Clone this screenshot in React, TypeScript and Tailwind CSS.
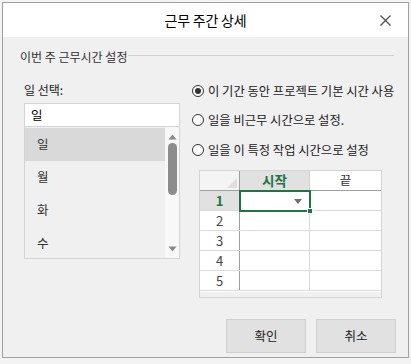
import React from "react";

const font = { fontFamily: '"Noto Sans CJK KR", "Noto Sans", sans-serif' };

function Radio({ checked }: { checked?: boolean }) {
  return (
    <svg width="12" height="12" viewBox="0 0 12 12" className="shrink-0">
      <circle cx="6" cy="6" r="5.5" fill="#fff" stroke="#333" strokeWidth="1" />
      {checked && <circle cx="6" cy="6" r="3" fill="#333" />}
    </svg>
  );
}

export default function App() {
  const rows = [1, 2, 3, 4, 5];
  return (
    <div className="w-[411px] h-[364px] bg-[#f3f3f3] overflow-hidden pl-[2px] pt-[2px]" style={font}>
      <div className="w-[407px] h-[356px] border border-[#a0a0a0] bg-[#f0f0f0] flex flex-col">
        {/* title bar */}
        <div className="h-[34px] bg-white flex items-center justify-center relative shrink-0">
          <span className="text-[14px] text-black tracking-[-0.2px]">근무 주간 상세</span>
          <svg className="absolute left-[377px] top-[12px]" width="11" height="11" viewBox="0 0 11 11">
            <path d="M0.5 0.5 L10.5 10.5 M10.5 0.5 L0.5 10.5" stroke="#555" strokeWidth="1.4" />
          </svg>
        </div>
        {/* group header */}
        <div className="flex items-center pl-[17px] pr-[14px] mt-[12px] h-[16px]">
          <span className="text-[12px] text-[#333] whitespace-nowrap">이번 주 근무시간 설정</span>
          <div className="flex-1 h-px bg-[#cfcfcf] ml-[1px] -mt-[4px]" />
        </div>
        <div className="flex mt-[17px]">
          {/* left */}
          <div className="ml-[21px] w-[156px] flex flex-col">
            <div className="text-[12px] text-[#222] leading-[16px] h-[16px]">일 선택:</div>
            <div className="mt-[5px] h-[24px] bg-white border border-[#d4d4d4] flex items-center pl-[6px] text-[12.5px] text-black">일</div>
            <div className="h-[132px] border border-[#d4d4d4] border-t-0 flex bg-[#f0f0f0]">
              <div className="flex-1 flex flex-col pt-[1px]">
                {["일", "월", "화", "수"].map((d, i) => (
                  <div
                    key={d}
                    className={`h-[33px] shrink-0 flex items-center pl-[12px] text-[12.5px] text-[#333] ${i === 0 ? "bg-[#d9d9d9]" : ""}`}
                  >
                    {d}
                  </div>
                ))}
              </div>
              <div className="w-[14px] bg-[#f8f8f8] flex flex-col items-center relative">
                <svg className="mt-[7px]" width="9" height="6" viewBox="0 0 9 6">
                  <path d="M4.5 0.5 L8.5 5.5 L0.5 5.5 Z" fill="#8a8a8a" />
                </svg>
                <div className="mt-[3px] w-[9px] h-[52px] rounded-full bg-[#8c8c8c]" />
                <div className="flex-1" />
                <svg className="mb-[6px]" width="9" height="6" viewBox="0 0 9 6">
                  <path d="M0.5 0.5 L8.5 0.5 L4.5 5.5 Z" fill="#8a8a8a" />
                </svg>
              </div>
            </div>
          </div>
          {/* right */}
          <div className="ml-[20px] flex flex-col">
            <div className="flex flex-col gap-[17px] mt-[3px]">
              <div className="flex items-center gap-[4px] h-[12px] -ml-[8px]">
                <Radio checked />
                <span className="text-[12.3px] text-[#222] whitespace-nowrap">이 기간 동안 프로젝트 기본 시간 사용</span>
              </div>
              <div className="flex items-center gap-[4px] h-[12px] -ml-[8px]">
                <Radio />
                <span className="text-[12.3px] text-[#222] whitespace-nowrap">일을 비근무 시간으로 설정.</span>
              </div>
              <div className="flex items-center gap-[4px] h-[12px] -ml-[8px] mt-[1px]">
                <Radio />
                <span className="text-[12.3px] text-[#222] whitespace-nowrap">일을 이 특정 작업 시간으로 설정</span>
              </div>
            </div>
            {/* grid */}
            <div className="mt-[14px] -ml-[1px] w-[183px] h-[128px] border border-[#d4d4d4] bg-[#f0f0f0]">
              <div className="bg-white w-[181px] h-[121px] flex flex-col">
                <div className="flex h-[20px] border-b border-[#9f9f9f]">
                  <div className="w-[40px] border-r border-[#9f9f9f] bg-[#f4f4f4] relative">
                    <svg className="absolute right-[2px] bottom-[2px]" width="10" height="10" viewBox="0 0 10 10">
                      <path d="M10 0 L10 10 L0 10 Z" fill="#dedede" />
                    </svg>
                  </div>
                  <div className="w-[70px] bg-[#e1e1e1] border-r border-[#d4d4d4] flex items-center justify-center text-[13.5px] font-bold text-[#217346]">시작</div>
                  <div className="flex-1 bg-white flex items-center justify-center text-[12.5px] text-[#333]">끝</div>
                </div>
                {rows.map((r) => (
                  <div key={r} className="flex h-[20px] border-b border-[#dadada]">
                    <div
                      className={`w-[40px] border-r border-[#9f9f9f] flex items-center justify-center text-[13px] ${
                        r === 1 ? "bg-[#e1e1e1] text-[#217346] font-bold" : "text-[#444]"
                      }`}
                    >
                      {r}
                    </div>
                    <div className="w-[70px] border-r border-[#dadada] relative">
                      {r === 1 && (
                        <div className="absolute -left-[1px] -top-[1px] w-[72px] h-[22px] border-2 border-[#217346] z-10">
                          <svg className="absolute left-[53px] top-[7px]" width="8" height="5" viewBox="0 0 8 5">
                            <path d="M0 0 L8 0 L4 5 Z" fill="#707070" />
                          </svg>
                          <div className="absolute -right-[4px] -bottom-[4px] w-[6px] h-[6px] bg-[#217346] border border-white" />
                        </div>
                      )}
                    </div>
                    <div className="flex-1" />
                  </div>
                ))}
              </div>
            </div>
          </div>
        </div>
        {/* buttons */}
        <div className="flex justify-end gap-[10px] pr-[12px] mt-[21px]">
          <button className="w-[80px] h-[34px] bg-[#e1e1e1] border border-[#cfcfcf] text-[12.5px] text-[#222]">확인</button>
          <button className="w-[80px] h-[34px] bg-[#e1e1e1] border border-[#cfcfcf] text-[12.5px] text-[#222]">취소</button>
        </div>
      </div>
    </div>
  );
}
